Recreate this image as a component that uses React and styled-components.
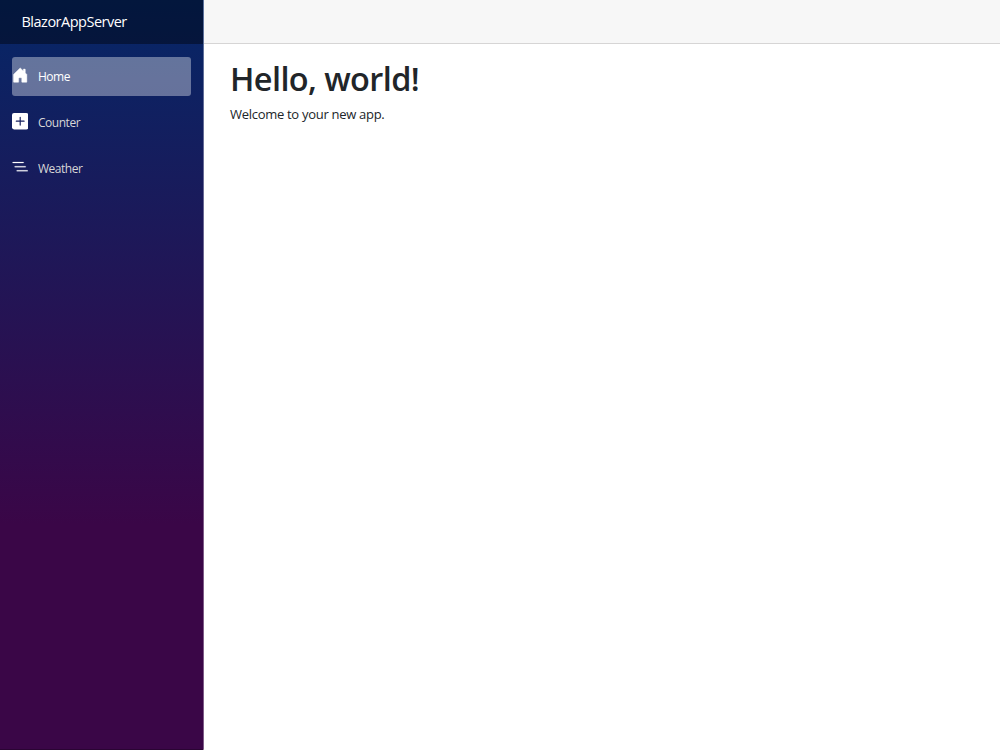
import React from "react";
import styled, { createGlobalStyle } from "styled-components";

const GlobalStyle = createGlobalStyle`
  * {
    box-sizing: border-box;
  }
  body {
    margin: 0;
    font-family: "Open Sans", "Noto Sans", sans-serif;
    color: #212529;
    background-color: #fff;
  }
`;

const Page = styled.div`
  display: flex;
  width: 100%;
  height: 100vh;
  overflow: hidden;
`;

const Sidebar = styled.aside`
  width: 204px;
  flex-shrink: 0;
  background-image: linear-gradient(180deg, #052767 0%, #3a0647 70%);
  border-right: 1px solid rgba(255, 255, 255, 0.35);
  border-bottom: 1px solid #2a0433;
`;

const Brand = styled.div`
  height: 44px;
  display: flex;
  align-items: center;
  padding: 0 0 2px 21.5px;
  background-color: rgba(0, 0, 0, 0.4);
  color: #fff;
`;

const BrandName = styled.span`
  font-size: 14.5px;
  letter-spacing: -0.5px;
  white-space: nowrap;
`;

const Nav = styled.nav`
  display: flex;
  flex-direction: column;
  gap: 6.6px;
  padding: 13px 12.4px 0 11.6px;
`;

const NavItem = styled.a`
  height: 39.3px;
  display: flex;
  align-items: center;
  border-radius: 3px;
  font-size: 12px;
  letter-spacing: -0.47px;
  color: ${({ $active }) => ($active ? "#fff" : "#d7d7d7")};
  background-color: ${({ $active }) =>
    $active ? "rgba(255, 255, 255, 0.37)" : "transparent"};

  svg {
    width: 16.4px;
    height: 16.4px;
    margin: 0 10px 2px 0;
    fill: #fff;
  }
`;

const Main = styled.main`
  flex: 1;
`;

const TopRow = styled.div`
  height: 44px;
  background-color: #f7f7f7;
  border-bottom: 1px solid #d6d5d5;
`;

const Content = styled.article`
  padding: 14px 26px;
`;

const Title = styled.h1`
  margin: 0 0 4px;
  font-size: 32.5px;
  font-weight: 600;
  line-height: 42px;
  letter-spacing: -0.6px;
`;

const Text = styled.p`
  margin: 0;
  font-size: 13px;
  line-height: 20px;
  letter-spacing: -0.29px;
`;

const links = [
  {
    name: "Home",
    active: true,
    icon: (
      <path
        stroke="#fff"
        strokeWidth="0.4"
        d="M6.5 14.5v-3.505c0-.245.25-.495.5-.495h2c.25 0 .5.25.5.5v3.5a.5.5 0 0 0 .5.5h4a.5.5 0 0 0 .5-.5v-7a.5.5 0 0 0-.146-.354L13 5.793V2.5a.5.5 0 0 0-.5-.5h-1a.5.5 0 0 0-.5.5v1.293L8.354 1.146a.5.5 0 0 0-.708 0l-6 6A.5.5 0 0 0 1.5 7.5v7a.5.5 0 0 0 .5.5h4a.5.5 0 0 0 .5-.5Z"
      />
    ),
  },
  {
    name: "Counter",
    icon: (
      <>
        <rect width="16" height="16" rx="2" />
        <path
          d="M8 4.2v7.6M4.2 8h7.6"
          stroke="#17215f"
          strokeWidth="1.15"
          strokeLinecap="round"
        />
      </>
    ),
  },
  {
    name: "Weather",
    icon: (
      <path
        fillRule="evenodd"
        stroke="#fff"
        strokeWidth="0.2"
        d="M4.5 11.5A.5.5 0 0 1 5 11h10a.5.5 0 0 1 0 1H5a.5.5 0 0 1-.5-.5zm-2-4A.5.5 0 0 1 3 7h10a.5.5 0 0 1 0 1H3a.5.5 0 0 1-.5-.5zm-2-4A.5.5 0 0 1 1 3h10a.5.5 0 0 1 0 1H1a.5.5 0 0 1-.5-.5z"
      />
    ),
  },
];

function App() {
  return (
    <Page>
      <GlobalStyle />
      <Sidebar>
        <Brand>
          <BrandName>BlazorAppServer</BrandName>
        </Brand>
        <Nav>
          {links.map((link) => (
            <NavItem key={link.name} $active={link.active}>
              <svg viewBox="0 0 16 16">{link.icon}</svg>
              {link.name}
            </NavItem>
          ))}
        </Nav>
      </Sidebar>
      <Main>
        <TopRow />
        <Content>
          <Title>Hello, world!</Title>
          <Text>Welcome to your new app.</Text>
        </Content>
      </Main>
    </Page>
  );
}

export default App;
